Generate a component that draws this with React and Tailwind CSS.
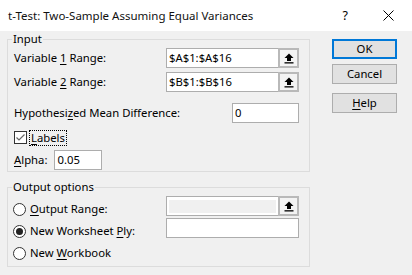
const font = { fontFamily: '"Noto Sans", "Segoe UI", sans-serif' };

function RefButton() {
  return (
    <div className="flex h-full w-[21px] items-center justify-center border-2 border-[#b9b9b9] bg-[#f3f3f3]">
      <svg width="10" height="11" viewBox="0 0 10 11">
        <polygon points="0.5,5 5,0.5 9.5,5" fill="#000" />
        <rect x="3" y="4.5" width="4" height="3.5" fill="#000" />
        <rect x="0.5" y="9.2" width="9" height="1.3" fill="#000" />
      </svg>
    </div>
  );
}

function RangeBox({ value, disabled }) {
  return (
    <div className="flex h-[20px] w-[133px] border border-[#adadad] bg-white">
      <div className="flex flex-1 items-center px-[2px]">
        {disabled ? (
          <div className="h-[13px] w-full bg-[#f0f0f0]" />
        ) : (
          <span>{value}</span>
        )}
      </div>
      <div className="-my-px -mr-px">
        <RefButton />
      </div>
    </div>
  );
}

function Radio({ checked }) {
  return (
    <span className="flex h-[13px] w-[13px] items-center justify-center rounded-full border border-[#333] bg-white">
      {checked && <span className="h-[7px] w-[7px] rounded-full bg-[#222]" />}
    </span>
  );
}

function Btn({ children, primary }) {
  return (
    <div
      className={
        "flex h-[20px] w-[65px] items-center justify-center bg-[#e1e1e1] " +
        (primary ? "border-2 border-[#0078d7]" : "border border-[#adadad]")
      }
    >
      {children}
    </div>
  );
}

export default function App() {
  return (
    <div className="h-[275px] w-[412px] overflow-hidden bg-[#f0f0f0] text-[11.3px] leading-[16px] text-black" style={font}>
      <div className="flex h-[31px] items-center bg-white pl-[8px]">
        <span className="text-[11.5px] text-[#111]">t-Test: Two-Sample Assuming Equal Variances</span>
        <span className="ml-auto mr-[35px] text-[12.5px]">?</span>
        <svg width="11" height="11" viewBox="0 0 11 11" className="mr-[18px]">
          <line x1="0.5" y1="0.5" x2="10.5" y2="10.5" stroke="#000" strokeWidth="1" />
          <line x1="10.5" y1="0.5" x2="0.5" y2="10.5" stroke="#000" strokeWidth="1" />
        </svg>
      </div>

      <div className="flex pl-[7px] pr-[15px]">
        <div className="w-[303px]">
          <fieldset className="border border-[#dcdcdc] pb-[1px] pl-[6px] pr-[10px]">
            <legend className="ml-[-2px] px-px">Input</legend>
            <div className="mt-[1px] flex h-[20px] items-center">
              <span>Variable <u className="underline-offset-2">1</u> Range:</span>
              <div className="ml-auto"><RangeBox value="$A$1:$A$16" /></div>
            </div>
            <div className="mt-[4px] flex h-[20px] items-center">
              <span>Variable <u className="underline-offset-2">2</u> Range:</span>
              <div className="ml-auto"><RangeBox value="$B$1:$B$16" /></div>
            </div>
            <div className="mt-[11px] flex h-[20px] items-center">
              <span>Hypothesi<u className="underline-offset-2">z</u>ed Mean Difference:</span>
              <div className="ml-auto flex h-[20px] w-[67px] items-center border border-[#adadad] bg-white px-[2px]">0</div>
            </div>
            <div className="mt-[6px] flex h-[17px] items-center">
              <span className="flex h-[13px] w-[13px] items-center justify-center border border-[#333] bg-white">
                <svg width="11" height="11" viewBox="0 0 11 11">
                  <polyline points="1.5,5.5 4,8 9.5,2.5" fill="none" stroke="#666" strokeWidth="1.2" />
                </svg>
              </span>
              <span className="ml-[2px] border border-dotted border-black px-px leading-[14px]">
                <u className="underline-offset-2">L</u>abels
              </span>
            </div>
            <div className="mt-[4px] flex h-[20px] items-center">
              <span><u className="underline-offset-2">A</u>lpha:</span>
              <div className="ml-[7px] flex h-[20px] w-[48px] items-center border border-[#adadad] bg-white px-[2px]">0.05</div>
            </div>
          </fieldset>

          <fieldset className="mt-[7px] border border-[#dcdcdc] pb-[6px] pl-[5px] pr-[10px]">
            <legend className="ml-[-1px] px-px">Output options</legend>
            <div className="mt-[1px] flex h-[20px]">
              <div className="flex items-center gap-[4px] pt-[6px]">
                <Radio />
                <span><u className="underline-offset-2">O</u>utput Range:</span>
              </div>
              <div className="ml-auto"><RangeBox disabled /></div>
            </div>
            <div className="mt-[2px] flex h-[20px]">
              <div className="flex items-center gap-[4px] pt-[6px]">
                <Radio checked />
                <span>New Worksheet <u className="underline-offset-2">P</u>ly:</span>
              </div>
              <div className="ml-auto h-[20px] w-[133px] border border-[#adadad] bg-white" />
            </div>
            <div className="mt-[2px] flex h-[20px]">
              <div className="flex items-center gap-[4px] pt-[6px]">
                <Radio />
                <span>New <u className="underline-offset-2">W</u>orkbook</span>
              </div>
            </div>
          </fieldset>
        </div>

        <div className="ml-auto flex flex-col pt-[8px]">
          <Btn primary>OK</Btn>
          <div className="mt-[5px]"><Btn>Cancel</Btn></div>
          <div className="mt-[9px]"><Btn><span><u className="underline-offset-2">H</u>elp</span></Btn></div>
        </div>
      </div>
    </div>
  );
}
